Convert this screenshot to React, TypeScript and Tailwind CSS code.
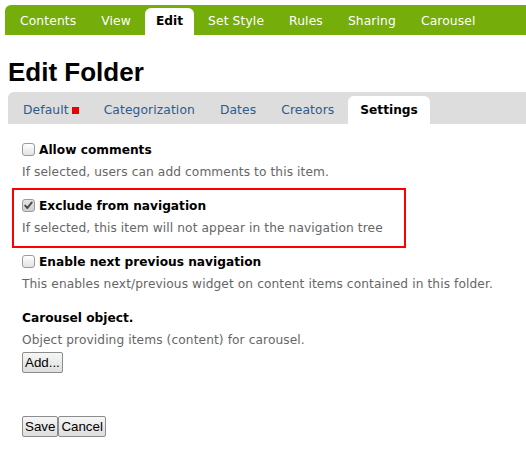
import React from "react";

const font = { fontFamily: '"DejaVu Sans", Verdana, sans-serif' };

function Box({ checked }: { checked?: boolean }) {
  return (
    <span
      className={
        "inline-flex items-center justify-center w-[13px] h-[13px] -mt-[2px] rounded-[3px] border border-[#9a9a9a] shrink-0 " +
        (checked ? "bg-gradient-to-b from-[#e4e4e4] to-[#cfcfcf]" : "bg-gradient-to-b from-[#ffffff] to-[#e2e2e2]")
      }
    >
      {checked && (
        <svg width="9" height="9" viewBox="0 0 9 9">
          <path d="M1.2 4.6 L3.4 7 L7.8 1.4" fill="none" stroke="#4a4a4a" strokeWidth="1.9" strokeLinecap="round" strokeLinejoin="round" />
        </svg>
      )}
    </span>
  );
}

function Field({ label, desc, checked, boxed }: { label: string; desc: string; checked?: boolean; boxed?: boolean }) {
  return (
    <div className="relative mb-[16px]">
      {boxed && (
        <div className="absolute -top-[9px] -bottom-[11px] -left-[10px] w-[394px] border-2 border-[#ff0000] pointer-events-none" />
      )}
      <div className="flex items-center h-[18px]">
        <Box checked={checked} />
        <span className="ml-[4px] font-bold text-[12.2px] text-black leading-[18px]">{label}</span>
      </div>
      <div className="mt-[4px] text-[12.2px] tracking-[0.1px] leading-[18px] text-[#666666]">{desc}</div>
    </div>
  );
}

function Btn({ children }: { children: React.ReactNode }) {
  return (
    <button
      className="h-[21px] px-[2px] border border-[#8c8c8c] rounded-[2px] bg-gradient-to-b from-[#f6f6f6] to-[#dedede] text-black text-[13.33px] leading-[17px]"
      style={{ fontFamily: '"Liberation Sans", Arial, sans-serif' }}
    >
      {children}
    </button>
  );
}

export default function App() {
  const top = ["Contents", "View", "Edit", "Set Style", "Rules", "Sharing", "Carousel"];
  const sub = ["Default", "Categorization", "Dates", "Creators", "Settings"];
  return (
    <div className="w-[526px] h-[459px] bg-white overflow-hidden" style={font}>
      <div className="pt-[5px] pl-[5px]">
        <div className="h-[30px] bg-[#75ad0a] rounded-tl-[6px] flex items-end pl-[4px] gap-[3px]">
          {top.map((t) =>
            t === "Edit" ? (
              <div key={t} className="h-[27px] px-[11px] bg-white rounded-t-[6px] flex items-center font-bold text-black text-[12.2px]">
                {t}
              </div>
            ) : (
              <div key={t} className="h-[27px] px-[11px] flex items-center text-white text-[12.3px] tracking-[0.12px]">
                {t}
              </div>
            )
          )}
        </div>
      </div>
      <div className="pl-[8px]">
        <h1
          className="mt-[22px] h-[30px] leading-[30px] text-[26px] font-bold text-black"
          style={{ fontFamily: '"Liberation Sans", Arial, sans-serif' }}
        >
          Edit Folder
        </h1>
        <div className="mt-[5px] h-[32px] bg-[#dddddd] rounded-tl-[6px] flex items-end pl-[4px] gap-[3px]">
          {sub.map((t) =>
            t === "Settings" ? (
              <div key={t} className="h-[28px] px-[12px] bg-white rounded-t-[6px] flex items-center font-bold text-black text-[12.2px]">
                {t}
              </div>
            ) : (
              <div key={t} className="h-[28px] px-[11px] flex items-center text-[#2c5b8e] text-[12.3px] tracking-[0.1px]">
                {t}
                {t === "Default" && <span className="ml-[3px] inline-block w-[7px] h-[7px] bg-[#ee0000]" />}
              </div>
            )
          )}
        </div>
      </div>
      <div className="pl-[22px] pt-[17px]">
        <Field label="Allow comments" desc="If selected, users can add comments to this item." />
        <Field
          label="Exclude from navigation"
          desc="If selected, this item will not appear in the navigation tree"
          checked
          boxed
        />
        <Field
          label="Enable next previous navigation"
          desc="This enables next/previous widget on content items contained in this folder."
        />
        <div>
          <div className="h-[18px] leading-[18px] font-bold text-[12.2px] text-black">Carousel object.</div>
          <div className="mt-[4px] text-[12.2px] tracking-[0.1px] leading-[18px] text-[#666666]">Object providing items (content) for carousel.</div>
          <div className="mt-[3px] flex">
            <Btn>Add...</Btn>
          </div>
        </div>
        <div className="mt-[43px] flex">
          <Btn>Save</Btn>
          <Btn>Cancel</Btn>
        </div>
      </div>
    </div>
  );
}
